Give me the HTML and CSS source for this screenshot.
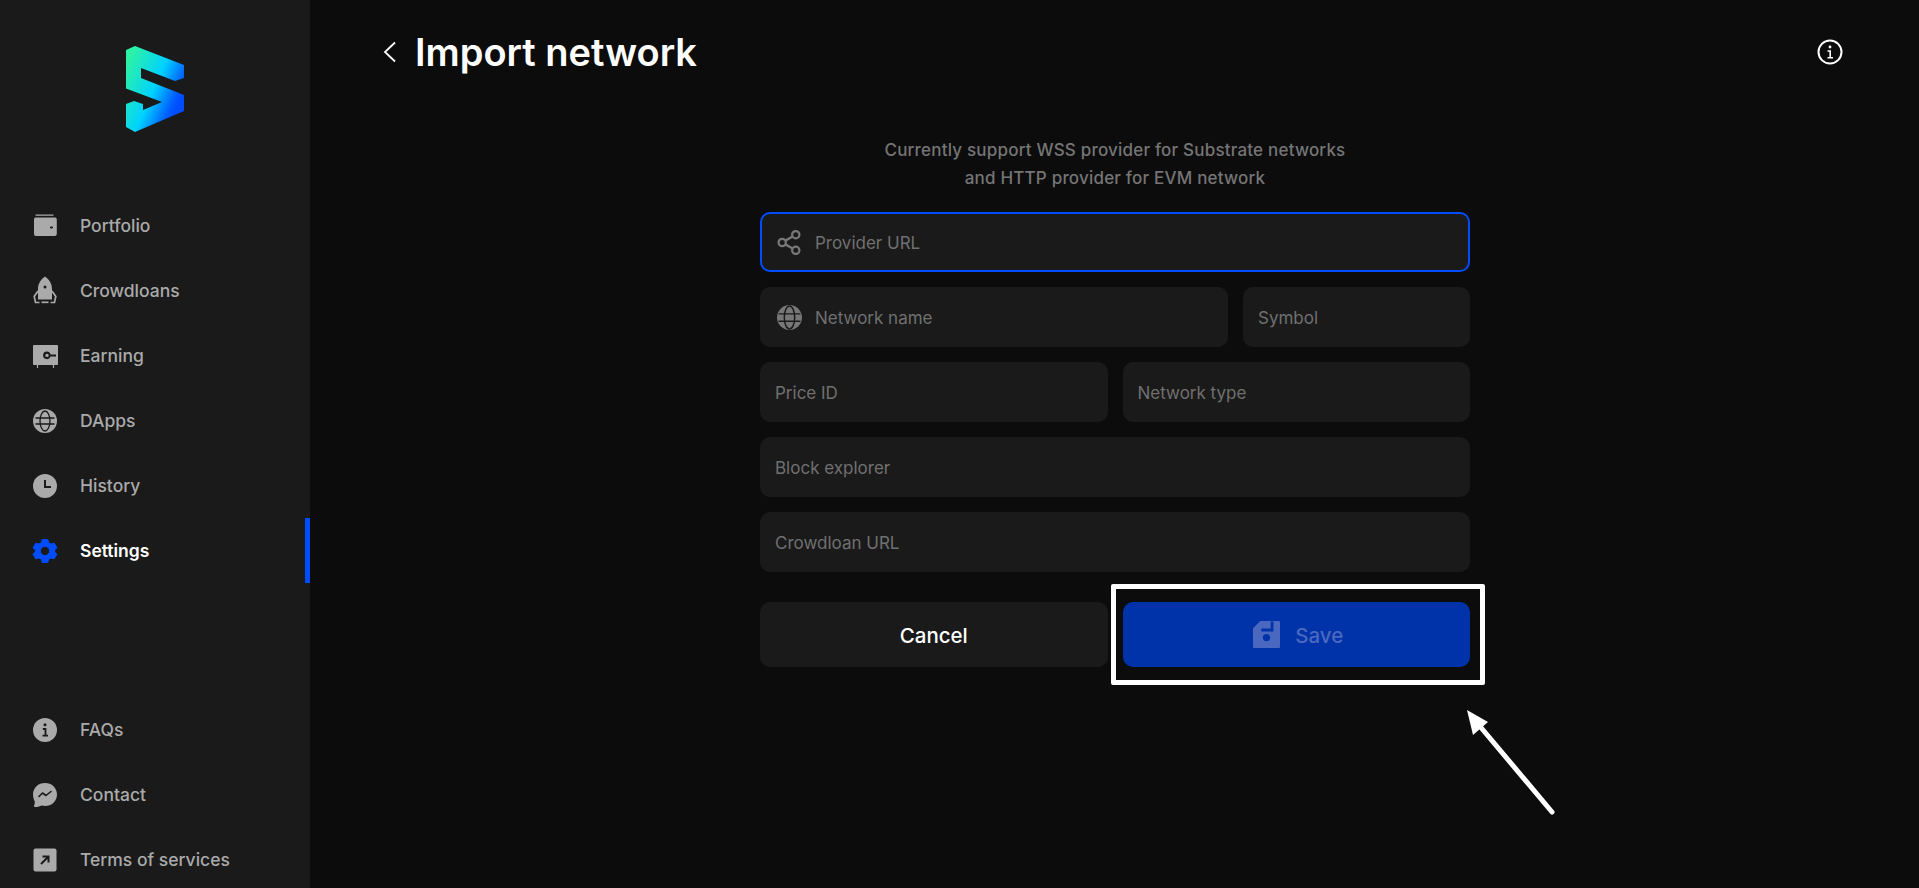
FILE: index.html
```html
<!DOCTYPE html>
<html lang="en">
<head>
    <meta charset="UTF-8">
    <meta name="viewport" content="width=device-width, initial-scale=1.0">
    <title>Import network</title>
    <link rel="stylesheet" href="styles.css">
</head>
<body>
    <div class="app">
        <aside class="sidebar">
            <div class="logo">
                <svg width="58" height="86" viewBox="0 0 58 86">
                    <defs>
                        <linearGradient id="logoFill" x1="0" y1="20" x2="58" y2="45" gradientUnits="userSpaceOnUse">
                            <stop offset="0" stop-color="#2cf2a6"/>
                            <stop offset="0.55" stop-color="#00d2ff"/>
                            <stop offset="0.9" stop-color="#0060ff"/>
                            <stop offset="1" stop-color="#004cff"/>
                        </linearGradient>
                    </defs>
                    <path d="M0 4L9 0L58 19V32L49 35L15 22V32L58 49V65L9 86L0 81V58L8 55L17 58V64L36 56L0 42.500Z" fill="url(#logoFill)"/>
                </svg>
            </div>
            <nav class="nav">
                <a class="nav-item">
                    <svg class="nav-icon" viewBox="0 0 24 24"><path d="M3 1.200H20" stroke="#aaa" stroke-width="1.200" stroke-linecap="round" fill="none"/><path fill-rule="evenodd" d="M2.500 3.500H21.500A2 2 0 0 1 23.800 5.500V20A2 2 0 0 1 21.800 22H3A2 2 0 0 1 1 20V5A2 2 0 0 1 2.500 3.500ZM18 12.500a1 1 0 1 0 0 2h1a1 1 0 1 0 0-2Z" fill="#aaa"/></svg>
                    <span>Portfolio</span>
                </a>
                <a class="nav-item">
                    <svg class="nav-icon" viewBox="0 0 24 24"><path fill-rule="evenodd" d="M12 -2.500C16.500 .5 19 5 19 10V20.500H5V10C5 5 7.500 .5 12 -2.500ZM12 6.500a1.500 1.500 0 1 0 0 3 1.500 1.500 0 0 0 0-3Z" fill="#aaa"/><path d="M5 12L1.200 17.500L2.500 23.500H6.500M19 12L22.800 17.500L21.500 23.500H17.500" stroke="#aaa" stroke-width="1.700" fill="none"/><path d="M8.500 23.300H15.500" stroke="#aaa" stroke-width="1.700"/></svg>
                    <span>Crowdloans</span>
                </a>
                <a class="nav-item">
                    <svg class="nav-icon" viewBox="0 0 24 24"><path fill-rule="evenodd" d="M1 1H24a1 1 0 0 1 1 1V20a1 1 0 0 1-1 1H1a1 1 0 0 1-1-1V2a1 1 0 0 1 1-1ZM14 7.500a3.800 3.800 0 1 0 3.500 5H23V10.500H17.500a3.800 3.800 0 0 0-3.500-3ZM14 9.700a1.700 1.700 0 1 1 0 3.400 1.700 1.700 0 0 1 0-3.400Z" fill="#aaa"/><path d="M4.500 21V24M20.500 21V24" stroke="#aaa" stroke-width="1.200"/></svg>
                    <span>Earning</span>
                </a>
                <a class="nav-item">
                    <svg class="nav-icon" viewBox="0 0 24 24"><circle cx="12" cy="12" r="12" fill="#aaa"/><g fill="none" stroke="#1a1a1a" stroke-width="1.300"><ellipse cx="12" cy="12" rx="5" ry="10"/><path d="M2.500 9H21.500M2.500 15H21.500"/></g></svg>
                    <span>DApps</span>
                </a>
                <a class="nav-item">
                    <svg class="nav-icon" viewBox="0 0 24 24"><circle cx="12" cy="12" r="12" fill="#aaa"/><path d="M12 6V13H18" stroke="#1a1a1a" stroke-width="2" fill="none"/></svg>
                    <span>History</span>
                </a>
                <a class="nav-item active">
                    <svg class="nav-icon" viewBox="0 0 26 26"><path fill-rule="evenodd" d="M10 .5H16L17 4L19.500 5.400L23 4.500L26 9.500L23.500 12V14L26 16.500L23 21.500L19.500 20.600L17 22L16 25.500H10L9 22L6.500 20.600L3 21.500L0 16.500L2.500 14V12L0 9.500L3 4.500L6.500 5.400L9 4ZM13 8a5 5 0 1 0 0 10 5 5 0 0 0 0-10Z" fill="#004cff" stroke="#004cff" stroke-width="1" stroke-linejoin="round"/></svg>
                    <span>Settings</span>
                </a>
            </nav>
            <nav class="nav nav-bottom">
                <a class="nav-item">
                    <svg class="nav-icon" viewBox="0 0 24 24"><circle cx="12" cy="12" r="12" fill="#aaa"/><circle cx="12" cy="6.800" r="1.500" fill="#1a1a1a"/><path d="M9.800 11H12.500V17.500M9.500 17.700H15" stroke="#1a1a1a" stroke-width="1.800" fill="none"/></svg>
                    <span>FAQs</span>
                </a>
                <a class="nav-item">
                    <svg class="nav-icon" viewBox="0 0 24 24"><path d="M12 0C18.800 0 24 4.800 24 11.500S18.800 23 12 23C10.800 23 9.800 22.800 8.700 22.500L4.500 24C2.500 24.200 .8 24 .8 23C1.500 21.500 2 20.500 1.800 18.500C.7 16.500 0 14 0 11.500C0 4.800 5.200 0 12 0Z" fill="#aaa"/><path d="M6 13.500L9.500 10L13 12.500L18 8.500" stroke="#1a1a1a" stroke-width="1.600" fill="none" stroke-linecap="round" stroke-linejoin="round"/></svg>
                    <span>Contact</span>
                </a>
                <a class="nav-item">
                    <svg class="nav-icon" viewBox="0 0 24 24"><rect x=".5" y=".5" width="23" height="23" rx="2" fill="#aaa"/><path d="M8 16L15.500 8.500M9.500 8.500H15.500V14.500" stroke="#1a1a1a" stroke-width="2" fill="none"/></svg>
                    <span>Terms of services</span>
                </a>
            </nav>
        </aside>

        <main class="main">
            <header class="header">
                <svg class="back" width="14" height="22" viewBox="0 0 14 22"><path d="M12 1.500L2 11L12 20.500" stroke="#fff" stroke-width="1.800" fill="none"/></svg>
                <h1>Import network</h1>
                <svg class="info" width="26" height="26" viewBox="0 0 26 26"><circle cx="13" cy="13" r="11.500" stroke="#fff" stroke-width="2" fill="none"/><circle cx="13" cy="8" r="1.400" fill="#fff"/><path d="M10.500 12H13.200V18.500M10.500 18.800H16" stroke="#fff" stroke-width="1.600" fill="none"/></svg>
            </header>

            <section class="form">
                <p class="hint">Currently support WSS provider for Substrate networks<br>and HTTP provider for EVM network</p>

                <div class="field focused">
                    <svg class="field-icon" viewBox="0 0 24 24"><g fill="none" stroke="#777" stroke-width="2.200"><circle cx="5" cy="12" r="3.500"/><circle cx="18" cy="4.500" r="3.500"/><circle cx="18" cy="19.500" r="3.500"/><path d="M8 10.200L15 6.300M8 13.800L15 17.700"/></g></svg>
                    <span>Provider URL</span>
                </div>
                <div class="row">
                    <div class="field with-icon grow">
                        <svg class="field-icon" viewBox="0 0 24 24"><circle cx="12" cy="12" r="12" fill="#777"/><g fill="none" stroke="#1a1a1a" stroke-width="1.400"><ellipse cx="12" cy="12" rx="5" ry="11"/><path d="M1.500 8.500H22.500M1.500 15.500H22.500"/></g></svg>
                        <span>Network name</span>
                    </div>
                    <div class="field symbol"><span>Symbol</span></div>
                </div>
                <div class="row">
                    <div class="field half"><span>Price ID</span></div>
                    <div class="field half"><span>Network type</span></div>
                </div>
                <div class="field"><span>Block explorer</span></div>
                <div class="field"><span>Crowdloan URL</span></div>

                <div class="row actions">
                    <button class="btn cancel" type="button">Cancel</button>
                    <button class="btn save" type="button">
                        <svg width="27" height="27" viewBox="0 0 26 26"><path fill-rule="evenodd" d="M7 0H25A1 1 0 0 1 26 1V25A1 1 0 0 1 25 26H1A1 1 0 0 1 0 25V7ZM17 0.500V7.300H8V10H19.700V0.500ZM13 12.500a3.500 3.500 0 1 0 0 7 3.500 3.500 0 0 0 0-7Z" fill="#4a68bf"/></svg>
                        <span>Save</span>
                    </button>
                </div>
            </section>
        </main>

        <!-- annotation drawn on top of the screenshot -->
        <div class="highlight"></div>
        <svg class="arrow" width="100" height="120" viewBox="0 0 100 120"><path d="M90 107L16 19" stroke="#fff" stroke-width="5" stroke-linecap="round"/><path d="M5 5L26 17L11 30Z" fill="#fff"/></svg>
    </div>
</body>
</html>
```

FILE: styles.css
```css
* {
    box-sizing: border-box;
}
html, body {
    margin: 0;
    height: 100%;
    overflow: hidden;
}
body {
    font-family: Inter, "Noto Sans", sans-serif;
    background-color: #0c0c0c;
    color: #fff;
}
.app {
    position: relative;
    display: flex;
    height: 888px;
}
.sidebar {
    width: 310px;
    flex-shrink: 0;
    display: flex;
    flex-direction: column;
    background-color: #1a1a1a;
    padding-top: 46px;
}
.logo {
    height: 147px;
    padding-left: 126px;
}
.logo svg {
    display: block;
}
.nav-bottom {
    margin-top: auto;
    margin-bottom: -4px;
}
.nav-item {
    position: relative;
    display: flex;
    align-items: center;
    height: 65px;
    padding-left: 33px;
    gap: 23px;
    font-size: 17.5px;
    font-weight: 500;
    color: #aaa;
}
.nav-icon {
    width: 24px;
    height: 24px;
    flex-shrink: 0;
    overflow: visible;
}
.nav-item.active {
    color: #fff;
    font-weight: 600;
}
.nav-item.active::after {
    content: "";
    position: absolute;
    right: 0;
    top: 0;
    width: 5px;
    height: 65px;
    background-color: #004cff;
}
.main {
    flex: 1;
    padding: 0 77px 0 73px;
}
.header {
    display: flex;
    align-items: center;
    height: 105px;
    padding-bottom: 1px;
}
.back {
    margin-right: 18px;
}
.header h1 {
    margin: 0;
    font-size: 38px;
    font-weight: 600;
}
.info {
    margin-left: auto;
    margin-right: -1px;
}
.form {
    width: 710px;
    margin-left: 377px;
    display: flex;
    flex-direction: column;
    gap: 15px;
}
.hint {
    margin: 31px 0 0;
    text-align: center;
    font-size: 17px;
    font-weight: 500;
    letter-spacing: 0.2px;
    line-height: 28px;
    color: #757575;
    height: 61px;
}
.row {
    display: flex;
    gap: 15px;
}
.field {
    display: flex;
    align-items: center;
    height: 60px;
    padding: 2px 15px 0;
    gap: 13px;
    background-color: #1a1a1a;
    border-radius: 10px;
    font-size: 17px;
    color: #707070;
}
.field.focused {
    border: 2px solid #004cff;
    padding: 2px 15px 0;
}
.with-icon {
    padding-left: 17px;
}
.field-icon {
    width: 25px;
    height: 25px;
    flex-shrink: 0;
    margin-top: -2px;
}
.grow {
    flex: 1;
}
.symbol {
    width: 227px;
}
.half {
    flex: 1;
}
.actions {
    margin-top: 15px;
}
.btn {
    flex: 1;
    height: 65px;
    border: none;
    border-radius: 10px;
    padding: 2px 0 0;
    font-family: inherit;
    font-size: 20.5px;
    font-weight: 500;
    display: flex;
    align-items: center;
    justify-content: center;
    gap: 15px;
}
.btn svg {
    margin-top: -2px;
}
.cancel {
    background-color: #1a1a1a;
    color: #fff;
}
.save {
    background-color: #0033aa;
    color: #4a68bf;
}
.save svg {
    margin-left: 4px;
}
.highlight {
    position: absolute;
    left: 1111px;
    top: 584px;
    width: 374px;
    height: 101px;
    border: 5px solid #fff;
    border-radius: 2px;
}
.arrow {
    position: absolute;
    left: 1462px;
    top: 705px;
}
```
